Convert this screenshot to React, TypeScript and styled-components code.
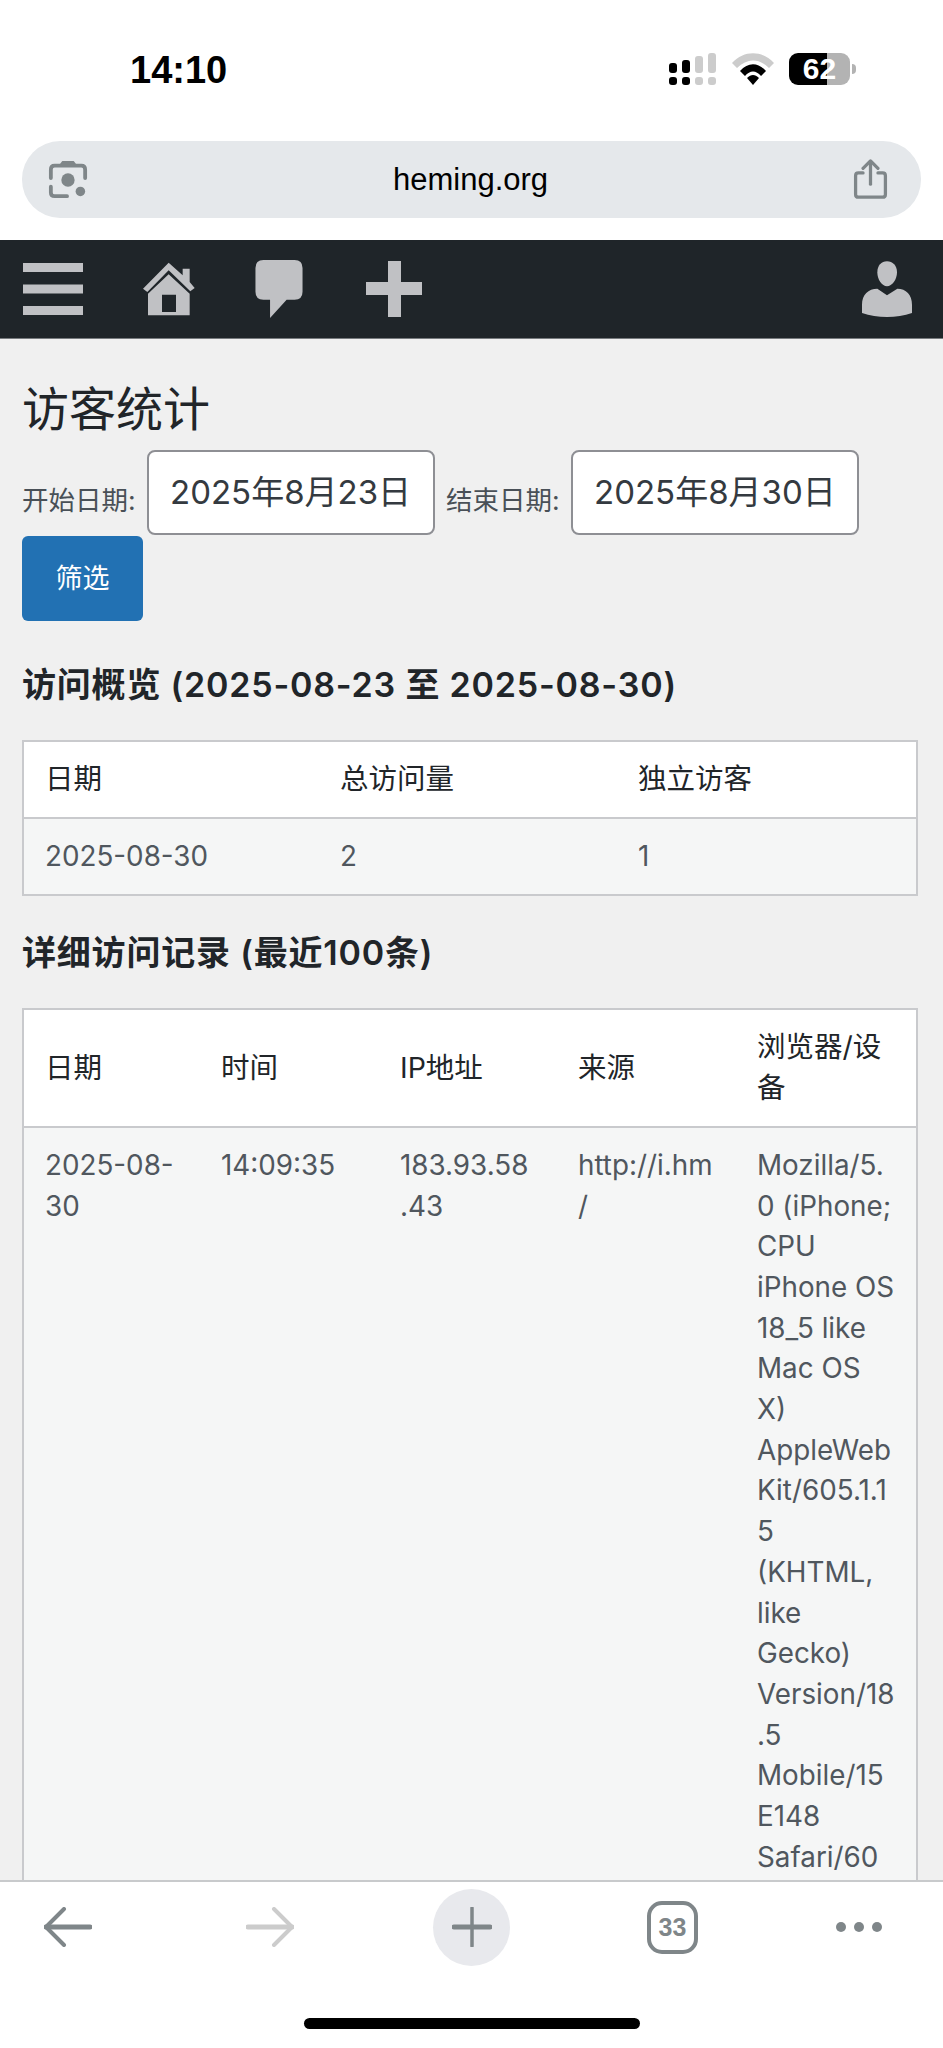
import * as React from 'react';
import styled, { createGlobalStyle } from 'styled-components';

const GlobalStyle = createGlobalStyle`
  html, body {
    margin: 0;
    padding: 0;
    background: #ffffff;
  }
  body {
    font-family: Inter, "Noto Sans CJK SC", sans-serif;
    color: #212529;
  }
  * {
    box-sizing: border-box;
  }
`;

const Page = styled.div`
  width: 943px;
  height: 2048px;
  display: flex;
  flex-direction: column;
  overflow: hidden;
`;

const StatusBar = styled.div`
  height: 141px;
  flex: none;
  display: flex;
  justify-content: space-between;
  padding: 49px 87px 0 130px;
`;

const Clock = styled.div`
  font-family: "Liberation Sans", sans-serif;
  font-size: 38px;
  font-weight: 700;
  line-height: 42px;
  color: #000000;
`;

const StatusIcons = styled.div`
  display: flex;
  align-items: flex-start;
  gap: 15px;
  padding-top: 4px;
`;

const Battery = styled.div`
  width: 61px;
  height: 32px;
  border-radius: 9px;
  background: linear-gradient(to right, #000000 62%, #b3b3b3 62%);
  color: #ffffff;
  font-family: "Liberation Sans", sans-serif;
  font-size: 30px;
  font-weight: 700;
  line-height: 32px;
  text-align: center;
`;

const BatteryWrap = styled.div`
  display: flex;
  align-items: center;
  gap: 2px;
`;

const BatteryNub = styled.div`
  width: 4px;
  height: 10px;
  background: #b3b3b3;
  border-radius: 0 4px 4px 0;
`;

const UrlBar = styled.div`
  flex: none;
  height: 77px;
  margin: 0 22px 22px;
  padding: 0 33px 0 26px;
  border-radius: 38px;
  background: #e5e8eb;
  display: flex;
  align-items: center;
  justify-content: space-between;
`;

const UrlText = styled.div`
  font-family: "Liberation Sans", sans-serif;
  font-size: 31px;
  color: #000000;
`;

const NavBar = styled.div`
  flex: none;
  height: 99px;
  background: #1f2529;
  border-bottom: 1px solid #777b7e;
  display: flex;
  align-items: center;
  padding: 0 31px 0 23px;
`;

const NavIcon = styled.svg<{ $gap?: number }>`
  display: block;
  flex: none;
  margin-right: ${({ $gap }) => $gap ?? 0}px;
  fill: #c0c1c4;
`;

const NavSpacer = styled.div`
  flex: 1;
`;

const Main = styled.div`
  flex: 1;
  min-height: 0;
  overflow: hidden;
  background: #f0f0f0;
  padding: 40px 26px 0 22px;
`;

const Title = styled.h2`
  margin: 0 0 11px;
  font-size: 47px;
  font-weight: 400;
  line-height: 60px;
`;

const FilterForm = styled.form`
  display: flex;
  flex-wrap: wrap;
  align-items: center;
  column-gap: 11px;
  row-gap: 1px;
  margin-bottom: 42px;
`;

const FieldLabel = styled.label`
  width: 114px;
  padding-top: 12px;
  font-size: 26.5px;
  color: #495057;
  white-space: nowrap;
`;

const DateInput = styled.input`
  width: 288px;
  height: 85px;
  padding: 0 0 6px 21px;
  border: 2px solid #8e8f94;
  border-radius: 8px;
  background: #ffffff;
  color: #343a40;
  font-family: Inter, "Noto Sans CJK SC", sans-serif;
  font-size: 33px;
  outline: none;
`;

const FilterButton = styled.button`
  width: 121px;
  height: 85px;
  padding: 0 0 5px;
  border: none;
  border-radius: 6px;
  background: #2271b3;
  color: #ffffff;
  font-family: Inter, "Noto Sans CJK SC", sans-serif;
  font-size: 27px;
`;

const SectionTitle = styled.h3`
  margin: 0 0 33px;
  font-size: 34px;
  font-weight: 600;
  letter-spacing: 0.8px;
  line-height: 44px;
`;

const DataTable = styled.table`
  width: 894px;
  table-layout: fixed;
  border-collapse: collapse;
  margin-bottom: 35px;
  border: 2px solid #c9cacd;
  font-size: 27.8px;
  line-height: 40.7px;
`;

const HeadCell = styled.th`
  padding: 17px 8px 17px 21px;
  background: #ffffff;
  border-bottom: 2px solid #c9cacd;
  color: #212529;
  font-size: 28.5px;
  font-weight: 400;
  text-align: left;
`;

const BodyCell = styled.td`
  padding: 17px 4px 18px 21px;
  background: #f5f6f6;
  color: #50575e;
  vertical-align: top;
  text-align: left;
`;

const TabBar = styled.div`
  flex: none;
  height: 106px;
  background: #ffffff;
  border-top: 2px solid #c8cacc;
  display: flex;
  align-items: center;
  gap: 137px;
  padding: 0 0 14px 44px;
`;

const ArrowIcon = styled.svg<{ $flip?: boolean; $gap: number }>`
  display: block;
  flex: none;
  margin-right: ${({ $gap }) => $gap}px;
  transform: ${({ $flip }) => ($flip ? 'scaleX(-1)' : 'none')};
`;

const NewTabButton = styled.div`
  width: 77px;
  height: 77px;
  flex: none;
  border-radius: 50%;
  background: #e8e9ed;
  display: flex;
  align-items: center;
  justify-content: center;
`;

const TabCount = styled.div`
  width: 51px;
  height: 53px;
  flex: none;
  border: 4px solid #7f8689;
  border-radius: 15px;
  color: #7f8689;
  font-family: "Liberation Sans", sans-serif;
  font-size: 25px;
  font-weight: 700;
  line-height: 45px;
  text-align: center;
`;

const HomeArea = styled.div`
  flex: none;
  height: 62px;
  background: #ffffff;
  display: flex;
  justify-content: center;
  padding-top: 32px;
`;

const HomeIndicator = styled.div`
  width: 336px;
  height: 11px;
  border-radius: 6px;
  background: #000000;
`;

const Signal = () => (
  <svg width="48" height="33" viewBox="0 0 48 33">
    <g fill="#000000">
      <rect x="0" y="10" width="8" height="10" rx="3" />
      <rect x="13" y="7" width="8" height="13" rx="3" />
      <rect x="0" y="24" width="8" height="8" rx="3" />
      <rect x="13" y="24" width="8" height="8" rx="3" />
    </g>
    <g fill="#cccccc">
      <rect x="26" y="3" width="8" height="17" rx="3" />
      <rect x="39" y="0" width="8" height="20" rx="3" />
      <rect x="26" y="24" width="8" height="8" rx="3" />
      <rect x="39" y="24" width="8" height="8" rx="3" />
    </g>
  </svg>
);

const Wifi = () => (
  <svg width="42" height="32" viewBox="0 0 42 32">
    <path d="M0 10 C12 -3 30 -3 42 10 L37 15 C27 5 15 5 5 15 Z" fill="#cccccc" />
    <path d="M8 18 C16 9 26 9 34 18 L29 23 C24 17 18 17 13 23 Z" fill="#000000" />
    <path d="M15 25 C19 21 23 21 27 25 L21 32 Z" fill="#000000" />
  </svg>
);

const Lens = () => (
  <svg width="40" height="40" viewBox="0 0 40 42">
    <g fill="none" stroke="#7f8689" strokeWidth="4" strokeLinecap="round">
      <path d="M2 19 V10 Q2 6 6 6 H34 Q38 6 38 10 V19" />
      <path d="M2 28 V34 Q2 38 6 38 H19" />
    </g>
    <path d="M11 5 L14 1 H26 L29 5 Z" fill="#7f8689" />
    <circle cx="20" cy="21" r="7" fill="#7f8689" />
    <circle cx="33" cy="33" r="5" fill="#7f8689" />
  </svg>
);

const Share = () => (
  <svg width="35" height="41" viewBox="0 0 36 44">
    <g fill="none" stroke="#7f8689" strokeWidth="3.5" strokeLinecap="round" strokeLinejoin="round">
      <path d="M10 15 H5 Q2 15 2 18 V38 Q2 41 5 41 H31 Q34 41 34 38 V18 Q34 15 31 15 H26" />
      <path d="M18 27 V3" />
      <path d="M10 10 L18 2 L26 10" />
    </g>
  </svg>
);

const Arrow = ({ color, flip, gap }: { color: string; flip?: boolean; gap: number }) => (
  <ArrowIcon $flip={flip} $gap={gap} width="48" height="40" viewBox="0 0 48 40">
    <g fill="none" stroke={color} strokeLinecap="round" strokeLinejoin="round">
      <path d="M2 20 H46" strokeWidth="5" />
      <path d="M20 2 L2 20 L20 38" strokeWidth="4" />
    </g>
  </ArrowIcon>
);

const Plus = () => (
  <svg width="40" height="40" viewBox="0 0 40 40">
    <g stroke="#7f8689" strokeLinecap="round">
      <path d="M20 1 V39" strokeWidth="3.5" />
      <path d="M2 20 H38" strokeWidth="5" />
    </g>
  </svg>
);

const Dots = () => (
  <svg width="48" height="12" viewBox="0 0 48 12">
    <g fill="#7f8689">
      <circle cx="6" cy="6" r="5" />
      <circle cx="24" cy="6" r="5" />
      <circle cx="42" cy="6" r="5" />
    </g>
  </svg>
);

const summaryWidths = [296, 298, 300];
const detailWidths = [177, 179, 178, 179, 181];

const agentLines = [
  'Mozilla/5.',
  '0 (iPhone;',
  'CPU',
  'iPhone OS',
  '18_5 like',
  'Mac OS',
  'X)',
  'AppleWeb',
  'Kit/605.1.1',
  '5',
  '(KHTML,',
  'like',
  'Gecko)',
  'Version/18',
  '.5',
  'Mobile/15',
  'E148',
  'Safari/60',
];

function renderLines(lines: string[]) {
  return lines.map((line) => (
    <React.Fragment key={line}>
      {line}
      <br />
    </React.Fragment>
  ));
}

export default function App() {
  return (
    <Page>
      <GlobalStyle />
      <StatusBar>
        <Clock>14:10</Clock>
        <StatusIcons>
          <Signal />
          <Wifi />
          <BatteryWrap>
            <Battery>62</Battery>
            <BatteryNub />
          </BatteryWrap>
        </StatusIcons>
      </StatusBar>
      <UrlBar>
        <Lens />
        <UrlText>heming.org</UrlText>
        <Share />
      </UrlBar>
      <NavBar>
        <NavIcon $gap={60} width="60" height="52" viewBox="0 0 60 52">
          <rect x="0" y="0" width="60" height="9" />
          <rect x="0" y="21.5" width="60" height="9" />
          <rect x="0" y="43" width="60" height="9" />
        </NavIcon>
        <NavIcon $gap={60} width="52" height="54" viewBox="430 70 156 162">
          <path d="M507 72 L430 150 L443 160 L507 95 L572 158 L585 148 L570 130 V90 H549 V110 Z" />
          <path
            fillRule="evenodd"
            d="M445 230 V165 L507 107 L570 165 V230 Z M487 168 V220 H529 V168 Z"
          />
        </NavIcon>
        <NavIcon $gap={63} width="48" height="58" viewBox="766 60 142 175">
          <path d="M790 60 H884 Q908 60 908 84 V156 Q908 180 884 180 H860 L810 235 V180 H790 Q766 180 766 156 V84 Q766 60 790 60 Z" />
        </NavIcon>
        <NavIcon width="56" height="56" viewBox="0 0 56 56">
          <rect x="22" y="0" width="13" height="56" />
          <rect x="0" y="21" width="56" height="13" />
        </NavIcon>
        <NavSpacer />
        <NavIcon width="50" height="56" viewBox="66 34 150 168">
          <path d="M141 35 C158 35 171 48 171 68 C171 90 156 110 141 110 C126 110 112 90 112 68 C112 48 124 35 141 35 Z" />
          <path d="M66 190 V165 C66 135 85 117 112 117 L141 137 L172 117 C198 117 216 135 216 165 V190 C170 206 112 206 66 190 Z" />
        </NavIcon>
      </NavBar>
      <Main>
        <Title>访客统计</Title>
        <FilterForm>
          <FieldLabel>开始日期:</FieldLabel>
          <DateInput type="text" readOnly value="2025年8月23日" />
          <FieldLabel>结束日期:</FieldLabel>
          <DateInput type="text" readOnly value="2025年8月30日" />
          <FilterButton type="button">筛选</FilterButton>
        </FilterForm>
        <SectionTitle>访问概览 (2025-08-23 至 2025-08-30)</SectionTitle>
        <DataTable>
          <colgroup>
            {summaryWidths.map((width, index) => (
              <col key={`summary-col-${index}`} style={{ width }} />
            ))}
          </colgroup>
          <thead>
            <tr>
              <HeadCell>日期</HeadCell>
              <HeadCell>总访问量</HeadCell>
              <HeadCell>独立访客</HeadCell>
            </tr>
          </thead>
          <tbody>
            <tr>
              <BodyCell>2025-08-30</BodyCell>
              <BodyCell>2</BodyCell>
              <BodyCell>1</BodyCell>
            </tr>
          </tbody>
        </DataTable>
        <SectionTitle>详细访问记录 (最近100条)</SectionTitle>
        <DataTable>
          <colgroup>
            {detailWidths.map((width, index) => (
              <col key={`detail-col-${index}`} style={{ width }} />
            ))}
          </colgroup>
          <thead>
            <tr>
              <HeadCell>日期</HeadCell>
              <HeadCell>时间</HeadCell>
              <HeadCell>IP地址</HeadCell>
              <HeadCell>来源</HeadCell>
              <HeadCell>
                浏览器/设
                <br />备
              </HeadCell>
            </tr>
          </thead>
          <tbody>
            <tr>
              <BodyCell>{renderLines(['2025-08-', '30'])}</BodyCell>
              <BodyCell>14:09:35</BodyCell>
              <BodyCell>{renderLines(['183.93.58', '.43'])}</BodyCell>
              <BodyCell>{renderLines(['http://i.hm', '/'])}</BodyCell>
              <BodyCell>{renderLines(agentLines)}</BodyCell>
            </tr>
          </tbody>
        </DataTable>
      </Main>
      <TabBar>
        <Arrow color="#7f8689" gap={17} />
        <Arrow color="#cccccc" flip gap={2} />
        <NewTabButton>
          <Plus />
        </NewTabButton>
        <TabCount>33</TabCount>
        <Dots />
      </TabBar>
      <HomeArea>
        <HomeIndicator />
      </HomeArea>
    </Page>
  );
}
